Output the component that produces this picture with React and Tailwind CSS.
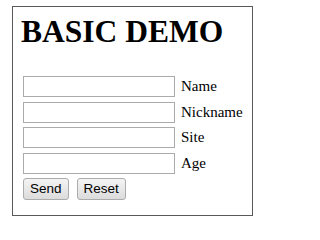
import React from "react";

const fields = ["Name", "Nickname", "Site", "Age"];

const App = () => {
  return (
    <div className="w-[276px] h-[225px] bg-white pt-[6px] pl-[12px]">
      {/* Form box */}
      <div className="w-[241px] h-[210px] border border-[#5a5a5a] px-[10px] pt-[9px]">
        <h1 className="-ml-[2px] text-[31.5px] leading-8 font-bold text-black font-['Liberation_Serif',serif]">
          BASIC DEMO
        </h1>

        <div className="mt-[28px] flex flex-col gap-[4.5px]">
          {fields.map((label) => (
            <div key={label} className="flex items-center gap-[6px] h-[21px]">
              <input
                type="text"
                className="w-[152px] h-[21px] border border-[#ababab] bg-white outline-none"
              />
              <span className="text-[15px] leading-none text-black font-['Liberation_Serif',serif]">
                {label}
              </span>
            </div>
          ))}

          {/* Buttons */}
          <div className="flex items-center gap-[8px]">
            <button className="h-[22px] px-[6px] border border-[#acacac] rounded-[3px] bg-gradient-to-b from-[#f4f4f4] to-[#dcdcdc] text-[13.5px] leading-none text-black font-['Liberation_Sans',sans-serif]">
              Send
            </button>
            <button className="h-[22px] px-[6px] border border-[#acacac] rounded-[3px] bg-gradient-to-b from-[#f4f4f4] to-[#dcdcdc] text-[13.5px] leading-none text-black font-['Liberation_Sans',sans-serif]">
              Reset
            </button>
          </div>
        </div>
      </div>
    </div>
  );
};

export default App;
